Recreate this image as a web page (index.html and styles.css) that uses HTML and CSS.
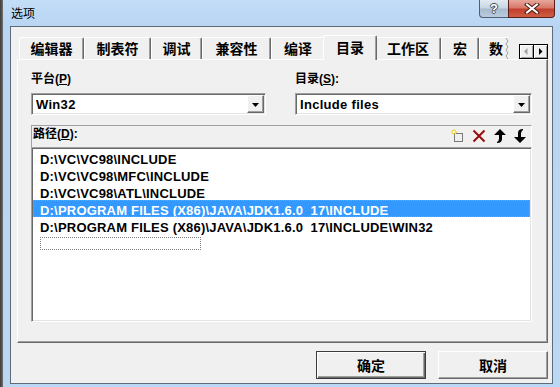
FILE: index.html
```html
<!DOCTYPE html>
<html lang="zh-CN">
<head>
<meta charset="utf-8">
<title>选项</title>
<link rel="stylesheet" href="styles.css">
</head>
<body>
<div class="screen">
  <div class="edge"></div>
  <div class="window">
    <div class="titlebar">
      <span class="title">选项</span>
      <div class="caption">
        <div class="cbtn help">?</div>
        <div class="cbtn close">
          <svg width="16" height="11" viewBox="0 0 16 11">
            <path d="M3 1.5 L13 9.5 M13 1.5 L3 9.5" stroke="#4a1a14" stroke-width="4" stroke-linecap="square"/>
            <path d="M3 1.5 L13 9.5 M13 1.5 L3 9.5" stroke="#ffffff" stroke-width="2" stroke-linecap="square"/>
          </svg>
        </div>
      </div>
    </div>
    <div class="client">
      <div class="tabbar">
        <div class="tab">编辑器</div>
        <div class="tab">制表符</div>
        <div class="tab">调试</div>
        <div class="tab">兼容性</div>
        <div class="tab">编译</div>
        <div class="tab sel">目录</div>
        <div class="tab">工作区</div>
        <div class="tab">宏</div>
        <div class="tab cut"><span>数</span>
          <svg class="wave" width="4" height="21" viewBox="0 0 4 21">
            <path d="M1 0 L3 3 L1 6 L3 9 L1 12 L3 15 L1 18 L3 21" fill="none" stroke="#a0a0a0" stroke-width="1"/>
          </svg>
        </div>
        <div class="spin">
          <div class="sbtn">
            <svg width="13" height="13" viewBox="0 0 13 13"><path d="M7.5 3 L7.5 10 L4 6.5 Z" fill="#a0a0a0"/></svg>
          </div>
          <div class="sbtn">
            <svg width="13" height="13" viewBox="0 0 13 13"><path d="M5 3 L5 10 L8.5 6.5 Z" fill="#000"/></svg>
          </div>
        </div>
      </div>
      <div class="panel">
        <div class="fields">
          <div class="field left">
            <div class="lbl">平台(<u>P</u>)</div>
            <div class="combo">
              <span class="value">Win32</span>
              <div class="drop"><svg width="7" height="4" viewBox="0 0 7 4"><path d="M0 0 H7 L3.5 4 Z" fill="#000"/></svg></div>
            </div>
          </div>
          <div class="field right">
            <div class="lbl">目录(<u>S</u>):</div>
            <div class="combo">
              <span class="value">Include files</span>
              <div class="drop"><svg width="7" height="4" viewBox="0 0 7 4"><path d="M0 0 H7 L3.5 4 Z" fill="#000"/></svg></div>
            </div>
          </div>
        </div>
        <div class="listhead">
          <span class="lbl2">路径(<u>D</u>):</span>
          <div class="tools">
            <svg width="13" height="14" viewBox="0 0 13 14">
              <rect x="3.5" y="4.5" width="8" height="8" fill="none" stroke="#000" stroke-width="1" stroke-dasharray="1 1"/>
              <path d="M3 0 V6 M0 3 H6 M1 1 L5 5 M5 1 L1 5" stroke="#f0d020" stroke-width="1"/>
              <rect x="2" y="2" width="2" height="2" fill="#ffffa0"/>
            </svg>
            <svg width="14" height="14" viewBox="0 0 14 14">
              <path d="M1.5 1.5 L12.5 12.5 M12.5 1.5 L1.5 12.5" stroke="#9a0c0c" stroke-width="2"/>
            </svg>
            <svg width="12" height="14" viewBox="0 0 12 14">
              <path d="M6 0 L12 6 L8 6 L8 10 Q8 14 3 14 L3 13 Q5 12 5 9.5 L5 6 L0 6 Z" fill="#000"/>
            </svg>
            <svg width="12" height="14" viewBox="0 0 12 14">
              <path d="M6 14 L0 8 L4 8 L4 4 Q4 0 9 0 L9 1 Q7 2 7 4.5 L7 8 L12 8 Z" fill="#000"/>
            </svg>
          </div>
        </div>
        <div class="list">
          <div class="row">D:\VC\VC98\INCLUDE</div>
          <div class="row">D:\VC\VC98\MFC\INCLUDE</div>
          <div class="row">D:\VC\VC98\ATL\INCLUDE</div>
          <div class="row sel">D:\PROGRAM FILES (X86)\JAVA\JDK1.6.0<span class="us">_</span>17\INCLUDE</div>
          <div class="row">D:\PROGRAM FILES (X86)\JAVA\JDK1.6.0<span class="us">_</span>17\INCLUDE\WIN32</div>
          <div class="row"><div class="edit"></div></div>
        </div>
      </div>
      <div class="btns">
        <div class="btn def">确定</div>
        <div class="btn">取消</div>
      </div>
    </div>
  </div>
</div>
</body>
</html>
```
FILE: styles.css
```css
* { box-sizing: border-box; }
html, body { margin: 0; padding: 0; }
body {
  width: 560px;
  height: 387px;
  overflow: hidden;
  background: #b9d5f0;
  font-family: "Liberation Sans", "Noto Sans CJK SC", sans-serif;
  color: #000;
}
.screen { display: flex; height: 387px; }
.edge { width: 3px; background: linear-gradient(to right, #3a3a3a, #707070); }
.window {
  width: 557px;
  height: 387px;
  display: flex;
  flex-direction: column;
  background: linear-gradient(to bottom, #c3ddf7 0, #b8d5f3 26px, #bcd7f1 100%);
}
.titlebar {
  height: 26px;
  display: flex;
  justify-content: space-between;
  align-items: flex-start;
  padding: 0 5px 0 8px;
}
.title {
  font: 12px/16px "Noto Sans CJK SC", sans-serif;
  margin-top: 5px;
}
.caption { display: flex; }
.cbtn {
  height: 18px;
  display: flex;
  align-items: center;
  justify-content: center;
  border: 1px solid #4f5e70;
  border-top: none;
}
.help {
  width: 29px;
  border-right: none;
  border-radius: 0 0 0 4px;
  background: linear-gradient(to bottom, #e2eaf3 0, #c9d6e4 45%, #a9bbcf 55%, #b9cbdf 100%);
  color: #fff;
  font: bold 13px/16px "Liberation Sans", sans-serif;
  text-shadow: 1px 0 #3c4a5a, -1px 0 #3c4a5a, 0 1px #3c4a5a, 0 -1px #3c4a5a;
}
.close {
  width: 47px;
  border-color: #5a1f18;
  border-radius: 0 0 4px 0;
  background: linear-gradient(to bottom, #e8a89c 0, #d6796b 45%, #c2402f 55%, #cf5e44 100%);
}
.client {
  height: 358px;
  margin: 0 7px;
  border: 1px solid #5d6b7b;
  background: #f0f0f0;
  display: flex;
  flex-direction: column;
  padding: 8px 4px 0 6px;
}
.tabbar {
  height: 24px;
  display: flex;
  align-items: flex-end;
  padding-left: 2px;
}
.tab {
  flex: none;
  height: 22px;
  display: flex;
  align-items: center;
  justify-content: center;
  border-top: 1px solid #fff;
  border-left: 1px solid #fff;
  border-right: 1px solid #696969;
  box-shadow: inset -1px 0 #a0a0a0;
  border-radius: 2px 2px 0 0;
  background: #f0f0f0;
  font: bold 14px/18px "Noto Sans CJK SC", sans-serif;
  padding-bottom: 1px;
}
.tab:nth-child(1) { width: 65px; }
.tab:nth-child(2) { width: 67px; }
.tab:nth-child(3) { width: 51px; }
.tab:nth-child(4) { width: 69px; }
.tab:nth-child(5) { width: 54px; }
.tab:nth-child(7) { width: 66px; }
.tab:nth-child(8) { width: 38px; }
.tab.sel {
  width: 54px;
  height: 25px;
  margin: 0 -2px -1px;
  position: relative;
  z-index: 2;
  padding-bottom: 3px;
}
.tab.cut {
  width: 30px;
  border-right: none;
  box-shadow: none;
  justify-content: flex-end;
  padding-left: 10px;
}
.tab.cut span { margin-right: 2px; }
.wave { display: block; flex: none; }
.spin {
  margin-left: auto;
  display: flex;
  align-self: flex-end;
  margin-bottom: 0;
}
.sbtn {
  width: 15px;
  height: 15px;
  border: 1px solid #000;
  box-shadow: inset 1px 1px #fff, inset -1px -1px #a0a0a0;
  background: #f0f0f0;
  display: flex;
}
.sbtn + .sbtn { border-left: none; width: 14px; }
.panel {
  height: 284px;
  border: 1px solid;
  border-color: #fff #696969 #696969 #fff;
  box-shadow: inset -1px -1px #a0a0a0;
  padding: 10px 0 0 13px;
}
.fields { display: flex; gap: 29px; width: 501px; }
.field.left { width: 235px; }
.field.right { width: 237px; }
.lbl {
  font: bold 12px/16px "Liberation Sans", "Noto Sans CJK SC", sans-serif;
  height: 16px;
  margin-top: 1px;
  margin-bottom: 6px;
}
.lbl u, .lbl2 u { text-underline-offset: 1px; }
.combo {
  height: 22px;
  background: #fff;
  border: 1px solid;
  border-color: #a0a0a0 #fff #fff #a0a0a0;
  box-shadow: inset 1px 1px #696969, inset -1px -1px #e3e3e3;
  display: flex;
  align-items: center;
  padding: 1px;
}
.value {
  flex: 1;
  font: bold 13px/18px "Liberation Sans", sans-serif;
  letter-spacing: 0.3px;
  padding-left: 3px;
  padding-top: 1px;
}
.drop {
  width: 17px;
  height: 18px;
  border: 1px solid;
  border-color: #fff #696969 #696969 #fff;
  box-shadow: inset -1px -1px #a0a0a0;
  background: #f0f0f0;
  display: flex;
  align-items: center;
  justify-content: center;
  padding-top: 1px;
}
.listhead {
  margin-top: 10px;
  width: 501px;
  height: 22px;
  border-top: 1px solid #a0a0a0;
  border-left: 1px solid #a0a0a0;
  border-right: 1px solid #fff;
  display: flex;
  align-items: flex-start;
  padding: 1px 5px 0 1px;
}
.lbl2 {
  font: bold 12px/14px "Liberation Sans", "Noto Sans CJK SC", sans-serif;
}
.tools {
  margin-left: auto;
  display: flex;
  gap: 8px;
  margin-top: 2px;
}
.tools svg { display: block; }
.list {
  width: 501px;
  height: 175px;
  background: #fff;
  border: 1px solid;
  border-color: #a0a0a0 #fff #fff #a0a0a0;
  box-shadow: inset 1px 1px #696969, inset -1px -1px #e3e3e3;
  padding: 1px;
}
.row {
  height: 17px;
  padding: 4px 0 0 7px;
  font: bold 13px/13px "Liberation Sans", sans-serif;
  letter-spacing: 0.2px;
  white-space: pre;
}
.row .us { color: transparent; }
.row.sel {
  background: #3399ff;
  color: #fff;
  outline: 1px dotted #f08a24;
  outline-offset: -1px;
}
.edit {
  margin-top: -1px;
  width: 161px;
  height: 13px;
  border: 1px dotted #808080;
}
.btns {
  margin-top: 8px;
  display: flex;
  justify-content: flex-end;
  gap: 12px;
}
.btn {
  width: 110px;
  height: 28px;
  border: 1px solid;
  border-color: #fff #696969 #696969 #fff;
  box-shadow: inset -1px -1px #a0a0a0;
  display: flex;
  align-items: center;
  justify-content: center;
  font: bold 14px/18px "Noto Sans CJK SC", sans-serif;
}
.btn.def {
  border: 1px solid #3c3c3c;
  box-shadow: inset 1px 1px #fff, inset -1px -1px #696969, inset -2px -2px #a0a0a0;
}
```
